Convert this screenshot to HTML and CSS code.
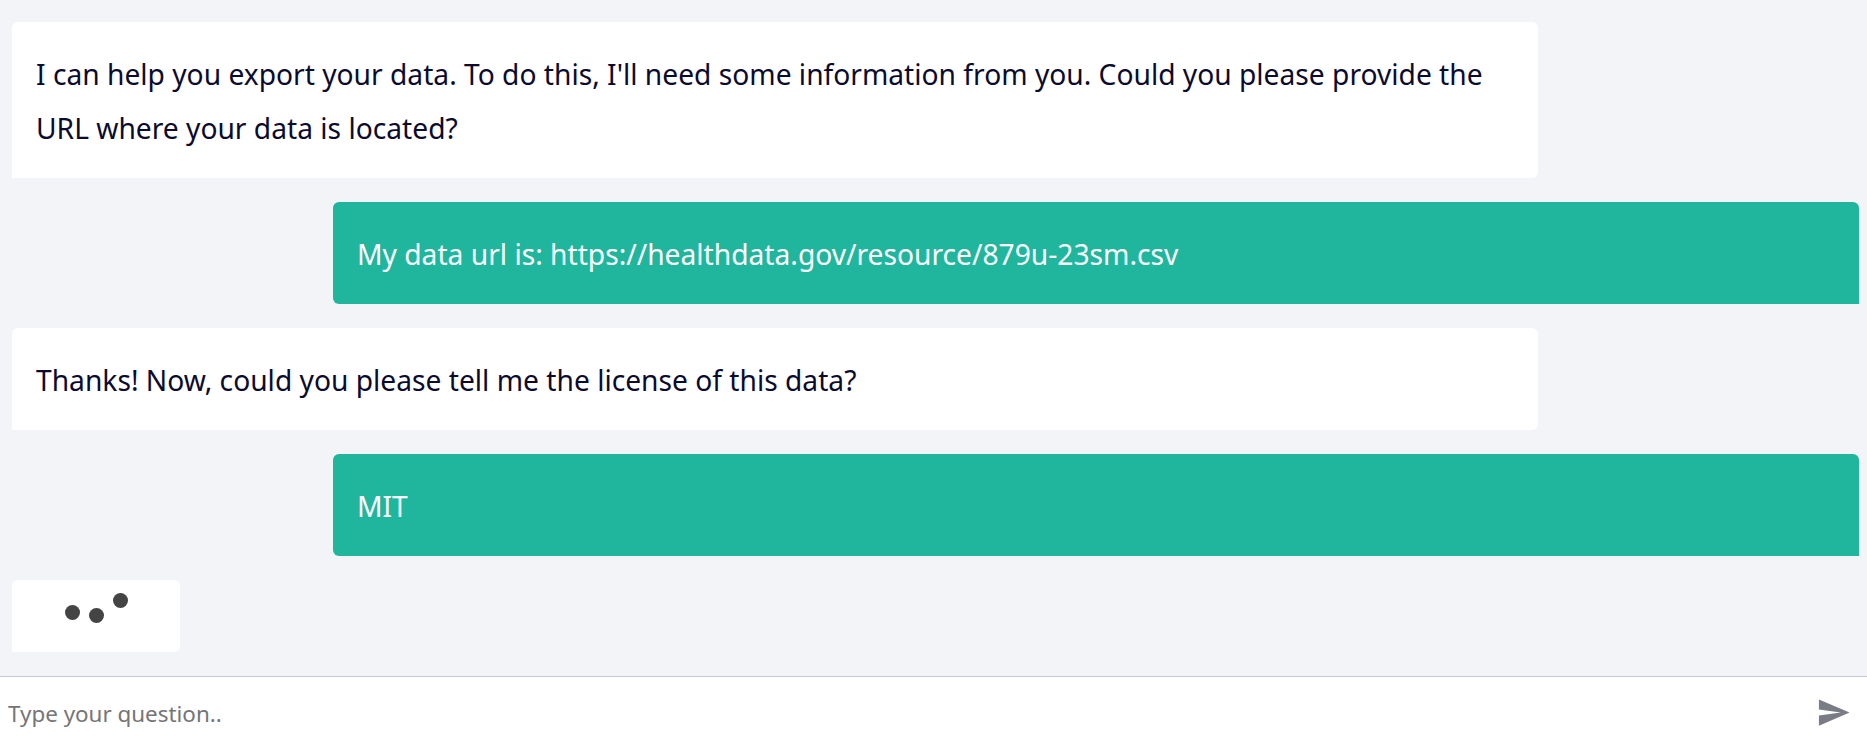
FILE: index.html
```html
<!DOCTYPE html>
<html>
	<head>
		<title>Chat</title>
		<link rel="stylesheet" href="styles.css">
	</head>
	<body>
		<div class="chat">
			<div class="messages">
				<div class="bubble bot">I can help you export your data. To do this, I'll need some information from you. Could you please provide the URL where your data is located?</div>
				<div class="bubble user">My data url is: https://healthdata.gov/resource/879u-23sm.csv</div>
				<div class="bubble bot">Thanks! Now, could you please tell me the license of this data?</div>
				<div class="bubble user">MIT</div>
				<div class="typing">
					<span class="dot dot1"></span>
					<span class="dot dot2"></span>
					<span class="dot dot3"></span>
				</div>
			</div>
			<form class="inputbar">
				<input type="text" class="question" placeholder="Type your question..">
				<button type="button" class="send">
					<svg viewBox="0 0 24 24" width="35" height="35"><path d="M2.01 21L23 12 2.01 3 2 10l15 2-15 2z"></path></svg>
				</button>
			</form>
		</div>
	</body>
</html>
```

FILE: styles.css
```css
html, body {
	margin: 0; height: 100%;
}
body {
	background: #f2f4f8; font-family: "Noto Sans", sans-serif; overflow: hidden;
}
.chat {
	height: 100vh; display: flex; flex-direction: column;
}
.messages {
	flex: 1; display: flex; flex-direction: column; gap: 24px; padding: 22px 8px 0 12px; min-height: 0;
}
.bubble {
	width: 1526px; box-sizing: border-box; padding: 25px 25px 23px 24px; font-size: 28.2px; line-height: 54px; border-radius: 6px;
}
.bot {
	background: #fff; color: #0b0b2e; border-bottom-left-radius: 0;
}
.user {
	background: #20b69e; color: #fff; align-self: flex-end; border-bottom-right-radius: 0;
}
.typing {
	width: 168px; height: 72px; background: #fff; border-radius: 6px; border-bottom-left-radius: 0;
	display: flex; justify-content: center; gap: 9px;
}
.dot {
	width: 15px; height: 15px; border-radius: 50%; background: #444;
}
.dot1 { margin-top: 25px; }
.dot2 { margin-top: 28px; }
.dot3 { margin-top: 13px; }
.inputbar {
	height: 70px; background: #fff; border-top: 1px solid #c6c8d2; display: flex; align-items: center; padding: 0 16px 0 8px;
}
.question {
	flex: 1; border: none; outline: none; padding: 2px 0 0 0; font-family: inherit; font-size: 22.4px; color: #0b0b2e;
}
.question::placeholder {
	color: #757575;
}
.send {
	border: none; background: none; padding: 0; display: flex;
}
.send svg {
	fill: #797c85;
}
```
